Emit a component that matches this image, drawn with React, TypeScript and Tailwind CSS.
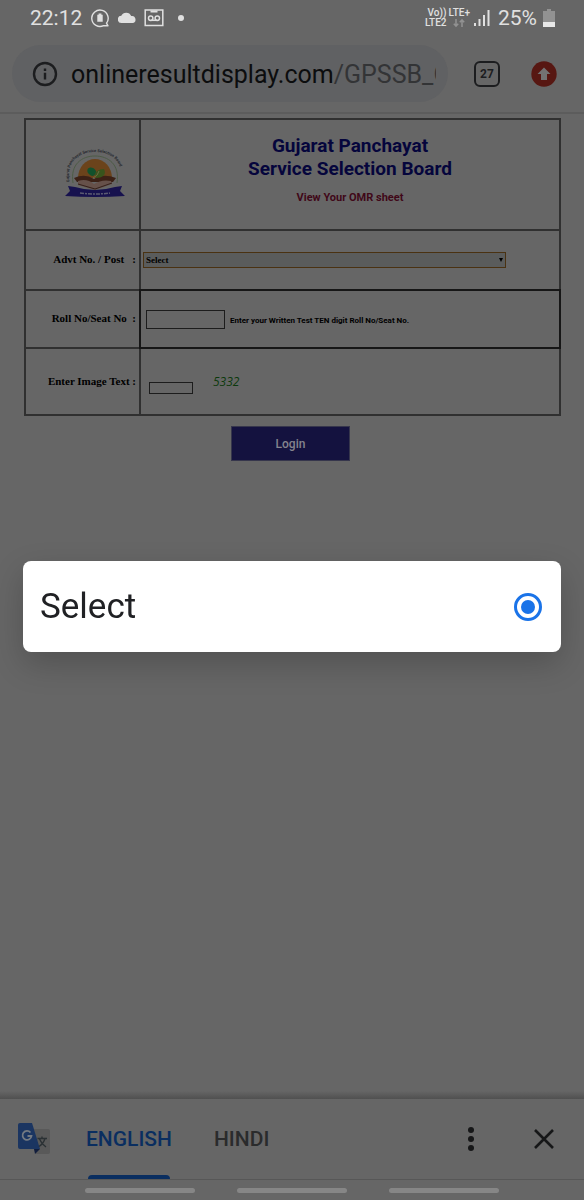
import { useState } from "react";

function StatusBar() {
  return (
    <div className="flex h-9 items-center justify-between pl-[30px] pr-[29px] text-[#e0e0e0]">
      <div className="flex items-center gap-2">
        <span className="text-[21px] leading-6">22:12</span>
        <svg className="size-5" viewBox="0 0 20 20" fill="none" stroke="currentColor" strokeWidth="1.4">
          <path d="M16.5 15.2A8.2 8.2 0 1 0 13.6 17.6L18 17.8Z" strokeLinejoin="round" />
          <path d="M7.3 6.8h5.4v7H7.3zM8.6 5.6h2.8v1.3H8.6z" fill="currentColor" stroke="none" />
        </svg>
        <svg className="h-5 w-[18px]" viewBox="0 0 18 20" fill="currentColor">
          <path d="M3.6 15a3.6 3.6 0 0 1-.3-7.2A5.4 5.4 0 0 1 13.2 8 3.5 3.5 0 0 1 14.6 15Z" />
        </svg>
        <svg className="size-5" viewBox="0 0 20 20" fill="none" stroke="currentColor" strokeWidth="1.5">
          <rect x="1.2" y="2" width="17.6" height="15.5" />
          <path d="M6.500 3.500h7" strokeWidth="2" />
          <path d="M6.7 12.300h6.600" />
          <circle cx="6.7" cy="10.2" r="2.2" />
          <circle cx="13.3" cy="10.2" r="2.2" />
        </svg>
        <span className="ml-1.5 size-1.5 rounded-full bg-[#e0e0e0]" />
      </div>
      <div className="flex items-center gap-1">
        <div className="flex gap-0.5 text-[10px] font-medium leading-[10px]">
          <div className="flex flex-col items-end">
            <span>Vo))</span>
            <span>LTE2</span>
          </div>
          <div className="flex flex-col items-center">
            <span>LTE+</span>
            <svg className="h-[10px] w-3 text-[#929292]" viewBox="0 0 12 10" fill="none" stroke="currentColor" strokeWidth="1.5">
              <path d="M3 1v7M.8 5.8 3 8.2l2.2-2.4M9 9V2M6.8 4.2 9 1.8l2.2 2.4" />
            </svg>
          </div>
        </div>
        <svg className="h-[18px] w-4" viewBox="0 0 16 18" fill="currentColor">
          <path d="M0 14h2v3H0zM4.5 10h2v7h-2zM9 6h2v11H9zM13.5 1h2v16h-2z" />
        </svg>
        <span className="ml-1 text-[21px] leading-6">25%</span>
        <svg className="ml-0.5 h-[18px] w-3" viewBox="0 0 12 18">
          <path d="M4 0h4v2h4v16H0V2h4z" fill="#929292" />
          <path d="M0 13h12v5H0z" fill="#e8e8e8" />
        </svg>
      </div>
    </div>
  );
}

function BrowserBar() {
  return (
    <div className="flex items-center border-b-2 border-[#5c5c5c] pb-[10px] pl-3 pr-[27px] pt-[9px]">
      <div className="flex h-[57px] min-w-0 flex-1 items-center rounded-full bg-[#606163] pl-5 pr-3">
        <button aria-label="Site information" className="mr-[13px] shrink-0">
          <svg className="size-[26px]" viewBox="0 0 26 26" fill="none" stroke="#1c1d1f" strokeWidth="2.4">
            <circle cx="13" cy="13" r="11" />
            <path d="M13 11.8v6.7M13 7.5V10" />
          </svg>
        </button>
        <a href="#" className="overflow-hidden whitespace-nowrap pt-0.5 text-[25px] leading-8 text-[#333436]">
          <span className="text-[#0c0d0e]">onlineresultdisplay.com</span>/GPSSB_O
        </a>
      </div>
      <button
        aria-label="Open tabs"
        className="ml-[26px] flex size-[26px] items-center justify-center rounded-md border-2 border-[#1c1d1f] text-[12px] font-bold text-[#1c1d1f]"
      >
        27
      </button>
      <button aria-label="Update" className="ml-[31px]">
        <svg className="size-[26px]" viewBox="0 0 26 26">
          <circle cx="13" cy="13" r="12.7" fill="#571712" />
          <path d="M13 6.5 19.5 13H16v6h-6v-6H6.5z" fill="#737373" />
        </svg>
      </button>
    </div>
  );
}

function BoardLogo() {
  return (
    <svg className="ml-6 h-[50px] w-[60px]" viewBox="0 0 60 50" role="img" aria-label="Board logo">
      <path id="arch" d="M4.5 34C1 12 15 4 30 4s29 8 25.5 30" fill="none" />
      <text fontSize="4" fontWeight="700" fill="#25282f">
        <textPath href="#arch">Gujarat Panchayat Service Selection Board</textPath>
      </text>
      <path d="M8 35C5 16 17 8 30 8s25 8 22 27" fill="none" stroke="#4d5c46" strokeWidth="1" />
      <path d="M13 30a17 19 0 0 1 34 0z" fill="#6b431b" />
      <path d="M9 30q11-5 20 1 9-6 22-1l-3 4H12z" fill="#3c2116" />
      <path d="M13 33q9-3 16 3 8-5 17-3l1 3-17 6-17-5z" fill="#66514a" />
      <path d="M13 36l17 5 17-6" fill="none" stroke="#34201b" strokeWidth="1" />
      <path d="M23 25c-3-6 5-8 8-2 0 5-4 7-8 2z" fill="#12512c" />
      <path d="M31 30c-3-6 3-9 8-9 3 6-2 9-8 9z" fill="#38541c" />
      <path d="M28 30q5-2 6-7" fill="none" stroke="#6b6b42" strokeWidth="1" />
      <path d="M3 38l7 1q20 6 40 0l7-1-2 5 5 5q-30 2-60 0l5-5z" fill="#17124e" />
      <path d="M15 45q15 2 30 0" fill="none" stroke="#5b5b72" strokeWidth="1.5" strokeDasharray="4 1 2 1" />
    </svg>
  );
}

function ResultForm() {
  return (
    <form className="pl-6 pr-[23px] pt-1" onSubmit={(e) => e.preventDefault()}>
      <table className="w-full table-fixed border-collapse border-2 border-[#303030]">
        <colgroup>
          <col className="w-[115px]" />
          <col />
        </colgroup>
        <tbody>
          <tr className="h-[111px]">
            <td className="border-2 border-[#303030] p-0 pb-1">
              <div className="flex justify-center">
                <BoardLogo />
              </div>
            </td>
            <td className="border-2 border-[#303030] p-0 text-center">
              <h1 className="text-[19px] font-bold leading-[23px] text-[#05053c]">
                Gujarat Panchayat
                <br />
                Service Selection Board
              </h1>
              <p className="mt-2 pb-2 text-[11px] font-bold leading-5 text-[#400818]">View Your OMR sheet</p>
            </td>
          </tr>
          <tr className="h-[60px]">
            <th className="border-2 border-[#303030] p-0 pb-0.5 pr-[3px] text-right font-['Liberation_Serif',serif] text-[11px] font-bold">
              <label htmlFor="advt">Advt No. / Post &nbsp;&nbsp;:</label>
            </th>
            <td className="border-2 border-[#303030] p-0 pl-0.5 pr-[53px]">
              <div className="relative">
                <select
                  id="advt"
                  className="block h-4 w-full appearance-none border border-[#4a3212] bg-[#5a5c5c] pl-0.5 font-['Liberation_Serif',serif] text-[9px] font-bold leading-3 text-black"
                >
                  <option>Select</option>
                </select>
                <svg className="pointer-events-none absolute inset-y-0 right-[3px] my-auto size-1" viewBox="0 0 4 4">
                  <path d="M0 0h4L2 4z" />
                </svg>
              </div>
            </td>
          </tr>
          <tr className="h-[58px]">
            <th className="border-2 border-[#303030] p-0 pb-0.5 pr-[3px] text-right font-['Liberation_Serif',serif] text-[11px] font-bold">
              <label htmlFor="roll">Roll No/Seat No &nbsp;:</label>
            </th>
            <td className="border-2 border-[#303030] p-0 pl-[5px] outline-2 -outline-offset-1 outline-[#161616]">
              <div className="flex items-center gap-[5px]">
                <input id="roll" className="h-[19px] w-[79px] border border-[#1c1c1c] px-1 text-[10px]" />
                <span className="pt-1 text-[8px] font-bold leading-3">
                  Enter your Written Test TEN digit Roll No/Seat No.
                </span>
              </div>
            </td>
          </tr>
          <tr className="h-[67px]">
            <th className="border-2 border-[#303030] p-0 pr-[3px] text-right font-['Liberation_Serif',serif] text-[11px] font-bold">
              <label htmlFor="captcha">Enter Image Text :</label>
            </th>
            <td className="border-2 border-[#303030] p-0 pl-2">
              <div className="flex items-end gap-5">
                <input id="captcha" className="h-3 w-11 border border-[#1c1c1c] px-1 text-[8px]" />
                <span className="font-['Open_Sans',sans-serif] text-[12px] italic leading-6 text-[#0c3a0c]">5332</span>
              </div>
            </td>
          </tr>
        </tbody>
      </table>
      <div className="flex justify-center pr-1 pt-[10px]">
        <button className="h-[35px] w-[119px] border border-[#36364c] bg-[#14123f] text-[12px] font-medium text-[#84848e]">
          Login
        </button>
      </div>
    </form>
  );
}

function TranslateIcon() {
  return (
    <svg className="h-8 w-8" viewBox="0 0 32 32">
      <path d="M13 6h17a2 2 0 0 1 2 2v21a2 2 0 0 1-2 2H18z" fill="#595959" />
      <path d="M16 26h6l-5 5z" fill="#111d3c" />
      <path d="M2 0h12l8 26H2a2 2 0 0 1-2-2V2a2 2 0 0 1 2-2z" fill="#1b3561" />
      <path d="M12.5 9.5A4.5 4.5 0 1 0 13.5 13H9.5" fill="none" stroke="#747a82" strokeWidth="1.8" />
      <path
        d="M19.5 15.5H29M24 13.5v2M27 15.5q-1.5 5-6 8M21.5 16q2 5 6.5 8"
        fill="none"
        stroke="#2b3134"
        strokeWidth="1.4"
      />
    </svg>
  );
}

function TranslateBar() {
  return (
    <div className="mt-auto">
      <div className="h-2 bg-linear-to-b from-[#666666] to-[#505050]" />
      <div className="flex h-[81px] items-stretch border-b border-[#575757] pl-[18px] pr-[30px]">
        <div className="flex items-center">
          <TranslateIcon />
        </div>
        <button className="relative ml-9 pt-0.5 text-[21px] font-medium text-[#0a2e60]">
          ENGLISH
          <span className="absolute inset-x-0.5 bottom-0 h-1 rounded-t-full bg-[#0a2e60]" />
        </button>
        <button className="ml-[42px] pt-0.5 text-[21px] font-medium text-[#2a2b2c]">HINDI</button>
        <button aria-label="More options" className="ml-auto">
          <svg className="h-6 w-1.5" viewBox="0 0 6 24" fill="#161718">
            <circle cx="3" cy="3" r="3" />
            <circle cx="3" cy="12" r="3" />
            <circle cx="3" cy="21" r="3" />
          </svg>
        </button>
        <button aria-label="Close" className="ml-[60px]">
          <svg className="size-5" viewBox="0 0 20 20" stroke="#161718" strokeWidth="2.6">
            <path d="M1 1l18 18M19 1 1 19" />
          </svg>
        </button>
      </div>
      <div className="flex h-5 items-center justify-center gap-[42px]">
        <span className="h-[5px] w-[110px] rounded-full bg-[#868686]" />
        <span className="h-[5px] w-[110px] rounded-full bg-[#868686]" />
        <span className="h-[5px] w-[110px] rounded-full bg-[#868686]" />
      </div>
    </div>
  );
}

export default function App() {
  const [choice, setChoice] = useState("select");

  return (
    <div className="relative flex min-h-screen flex-col bg-[#666666] font-[Roboto,sans-serif] text-black">
      <StatusBar />
      <BrowserBar />
      <ResultForm />
      <TranslateBar />

      {/* Option picker */}
      <div className="fixed inset-x-0 bottom-0 top-3 flex items-center px-[23px]">
        <div
          role="dialog"
          aria-label="Advt No. / Post"
          className="w-full rounded-lg bg-white shadow-[0_12px_32px_rgba(0,0,0,0.2)]"
        >
          <label className="flex h-[91px] items-center justify-between pl-[17px] pr-[19px] pt-0.5 text-[35px] text-[#202124]">
            Select
            <input
              type="radio"
              name="post"
              value="select"
              checked={choice === "select"}
              onChange={(e) => setChoice(e.target.value)}
              className="size-7 appearance-none rounded-full border-[3px] border-[#1a73e8] bg-white bg-clip-content p-1 checked:bg-[#1a73e8]"
            />
          </label>
        </div>
      </div>
    </div>
  );
}
